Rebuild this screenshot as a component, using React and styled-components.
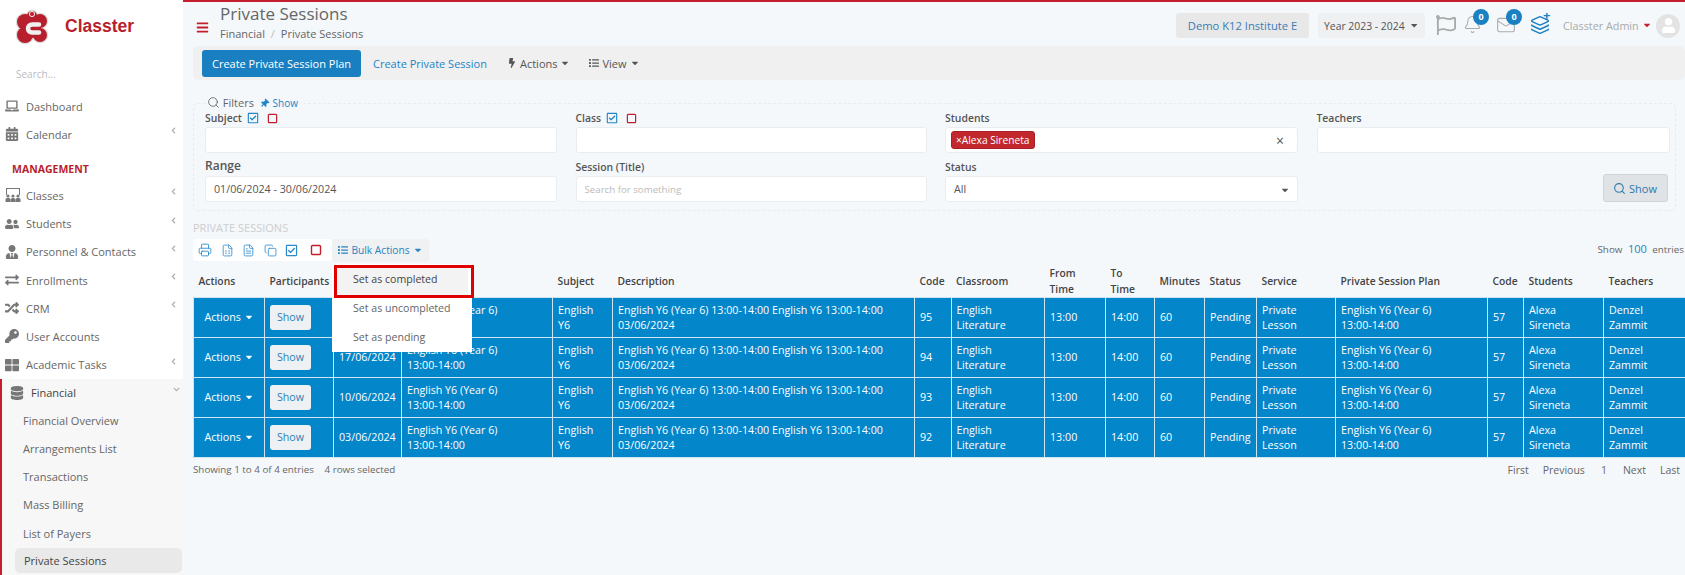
import styled, { createGlobalStyle } from 'styled-components';
import {
  FaBars, FaBolt, FaCalendarAlt, FaCaretDown, FaChevronDown, FaChevronLeft, FaDatabase, FaExchangeAlt, FaKey,
  FaLaptop, FaList, FaRandom, FaRegCheckSquare, FaRegFlag, FaThLarge, FaThumbtack, FaUser, FaUserFriends, FaUserTie,
} from 'react-icons/fa';
import { Bell, Copy, FileSpreadsheet, FileText, Layers, Mail, Printer, Search, Square } from 'lucide-react';

const GlobalStyle = createGlobalStyle`
  html, body { margin: 0; height: 575px; overflow: hidden; background: #f4f8fb; }
  body { font-family: "Open Sans", "Noto Sans", sans-serif; font-size: 11px; color: #555; }
  * { box-sizing: border-box; }
`;

const menuTop = [
  { icon: <FaLaptop />, label: 'Dashboard' },
  { icon: <FaCalendarAlt />, label: 'Calendar', arrow: true },
];
const menuManagement = [
  { icon: <ClassIcon />, label: 'Classes', arrow: true },
  { icon: <FaUserFriends />, label: 'Students', arrow: true },
  { icon: <FaUserTie />, label: 'Personnel & Contacts', arrow: true },
  { icon: <FaExchangeAlt />, label: 'Enrollments', arrow: true },
  { icon: <FaRandom />, label: 'CRM', arrow: true },
  { icon: <FaKey />, label: 'User Accounts' },
  { icon: <FaThLarge />, label: 'Academic Tasks', arrow: true },
];
const financialLinks = ['Financial Overview', 'Arrangements List', 'Transactions', 'Mass Billing', 'List of Payers'];

const columns = [
  ['Actions', 71], ['Participants', 69], ['Date', 68], ['Title', 151], ['Subject', 60], ['Description', 302],
  ['Code', 36.5], ['Classroom', 93.5], ['From Time', 61], ['To Time', 49], ['Minutes', 50], ['Status', 52],
  ['Service', 79], ['Private Session Plan', 152], ['Code', 36], ['Students', 80], ['Teachers', 82],
];
const rows = [
  { date: '24/06/2024', code: 95 },
  { date: '17/06/2024', code: 94 },
  { date: '10/06/2024', code: 93 },
  { date: '03/06/2024', code: 92 },
];

function ClassIcon() {
  return (
    <svg viewBox="0 0 16 14" width="16" height="14" fill="currentColor">
      <path d="M1 0h14v7h-1V1H2v6H1z" />
      <circle cx="3" cy="8" r="1.6" /><circle cx="8" cy="8" r="1.6" /><circle cx="13" cy="8" r="1.6" />
      <path d="M0.5 14v-2.5c0-1 1-1.5 2.5-1.5s2.5.5 2.5 1.5V14zM5.8 14v-2.5c0-1 1-1.5 2.2-1.5s2.2.5 2.2 1.5V14zM10.5 14v-2.5c0-1 1-1.5 2.5-1.5s2.5.5 2.5 1.5V14z" />
    </svg>
  );
}

const logoLobes = [[9, 13, 8], [24, 12, 7], [9, 26, 8], [24, 26, 7], [16, 7, 5], [16, 20, 9]];

function Logo() {
  return (
    <svg viewBox="0 0 33 36" width="33" height="36">
      {logoLobes.map(([x, y, r], i) => <circle key={i} cx={x} cy={y} r={r + 1.2} fill="#dcdcdc" />)}
      {logoLobes.map(([x, y, r], i) => <circle key={i} cx={x} cy={y} r={r} fill="#b81f2d" />)}
      <path d="M23 15.5h-7a4 4 0 0 0 0 8h7" fill="none" stroke="#efefef" strokeWidth="4.5" strokeLinecap="round" />
      <circle cx="16" cy="5" r="2.6" fill="#c8202f" stroke="#eee" strokeWidth="1" />
    </svg>
  );
}

function MenuRow({ icon, label, arrow }) {
  return (
    <MenuItem>
      <MenuIcon>{icon}</MenuIcon>
      <span>{label}</span>
      {arrow && <MenuArrow><FaChevronLeft /></MenuArrow>}
    </MenuItem>
  );
}

export default function App() {
  return (
    <>
      <GlobalStyle />
      <Page>
        <Sidebar>
          <Brand><Logo /><BrandName>Classter</BrandName></Brand>
          <SideSearch>Search...</SideSearch>
          {menuTop.map(m => <MenuRow key={m.label} {...m} />)}
          <SectionTitle>MANAGEMENT</SectionTitle>
          {menuManagement.map(m => <MenuRow key={m.label} {...m} />)}
          <FinancialGroup>
            <FinancialHead>
              <MenuIcon><FaDatabase /></MenuIcon>
              <span>Financial</span>
              <MenuArrow><FaChevronDown /></MenuArrow>
            </FinancialHead>
            {financialLinks.map(l => <SubLink key={l}>{l}</SubLink>)}
            <ActiveLink>Private Sessions</ActiveLink>
          </FinancialGroup>
        </Sidebar>

        <Main>
          <TopBar>
            <Burger><FaBars /></Burger>
            <TitleBlock>
              <PageTitle>Private Sessions</PageTitle>
              <Crumbs>Financial <CrumbSep>/</CrumbSep> Private Sessions</Crumbs>
            </TitleBlock>
            <TopRight>
              <Institute>Demo K12 Institute E</Institute>
              <YearPicker>Year 2023 - 2024 <FaCaretDown /></YearPicker>
              <TopIcon $w={27}><FaRegFlag size={20} /></TopIcon>
              <TopIcon $w={33}><Bell size={19} strokeWidth={1.3} /><Badge>0</Badge></TopIcon>
              <TopIcon $w={34}><Mail size={20} strokeWidth={1.3} /><Badge>0</Badge></TopIcon>
              <TopIcon $w={31} $blue><Layers size={20} strokeWidth={1.8} /><PlusMark>+</PlusMark></TopIcon>
              <UserName>Classter Admin <RedCaret><FaCaretDown /></RedCaret></UserName>
              <Avatar><FaUser /></Avatar>
            </TopRight>
          </TopBar>

          <ActionBar>
            <PrimaryButton>Create Private Session Plan</PrimaryButton>
            <ActionLink>Create Private Session</ActionLink>
            <ActionMenu><FaBolt /> Actions <FaCaretDown /></ActionMenu>
            <ActionMenu><FaList /> View <FaCaretDown /></ActionMenu>
          </ActionBar>

          <Filters>
            <FilterLegend>
              <Search size={13} strokeWidth={1.6} /> Filters
              <LegendShow><FaThumbtack /> Show</LegendShow>
            </FilterLegend>
            <FilterGrid>
              <Field>
                <FieldLabel>Subject <CheckIcon><FaRegCheckSquare /></CheckIcon><StopIcon><Square size={11} strokeWidth={2.6} /></StopIcon></FieldLabel>
                <Input />
              </Field>
              <Field>
                <FieldLabel>Class <CheckIcon><FaRegCheckSquare /></CheckIcon><StopIcon><Square size={11} strokeWidth={2.6} /></StopIcon></FieldLabel>
                <Input />
              </Field>
              <Field>
                <FieldLabel>Students</FieldLabel>
                <Input>
                  <Tag>×Alexa Sireneta</Tag>
                  <InputEnd>×</InputEnd>
                </Input>
              </Field>
              <Field>
                <FieldLabel>Teachers</FieldLabel>
                <Input />
              </Field>
              <Field $tall>
                <FieldLabel $big>Range</FieldLabel>
                <Input>01/06/2024 - 30/06/2024</Input>
              </Field>
              <Field $tall>
                <FieldLabel>Session (Title)</FieldLabel>
                <Input $placeholder>Search for something</Input>
              </Field>
              <Field $tall>
                <FieldLabel>Status</FieldLabel>
                <Input>All<InputEnd $small><FaCaretDown /></InputEnd></Input>
              </Field>
              <ShowCell>
                <ShowFilter><Search size={13} /> Show</ShowFilter>
              </ShowCell>
            </FilterGrid>
          </Filters>

          <TableTitle>PRIVATE SESSIONS</TableTitle>
          <TableTools>
            <ToolIcons>
              <Printer size={14} strokeWidth={1.5} />
              <FileSpreadsheet size={13} strokeWidth={1.5} />
              <FileText size={13} strokeWidth={1.5} />
              <Copy size={13} strokeWidth={1.5} />
              <FaRegCheckSquare size={13} />
              <StopIcon><Square size={12} strokeWidth={2.8} /></StopIcon>
            </ToolIcons>
            <BulkWrap>
              <BulkButton><FaList /> Bulk Actions <FaCaretDown /></BulkButton>
              <BulkMenu>
                <BulkItem $active>Set as completed</BulkItem>
                <BulkItem>Set as uncompleted</BulkItem>
                <BulkItem>Set as pending</BulkItem>
                <RedFrame />
              </BulkMenu>
            </BulkWrap>
            <Entries>Show <EntriesCount>100</EntriesCount> entries</Entries>
          </TableTools>

          <Table>
            <colgroup>
              {columns.map(([name, w], i) => <col key={i} width={w} />)}
            </colgroup>
            <thead>
              <tr>{columns.map(([name], i) => <Th key={i}>{name}</Th>)}</tr>
            </thead>
            <tbody>
              {rows.map(r => (
                <tr key={r.code}>
                  <Td $center>Actions <FaCaretDown size={10} /></Td>
                  <Td><RowShow>Show</RowShow></Td>
                  <Td>{r.date}</Td>
                  <Td>English Y6 (Year 6)<br />13:00-14:00</Td>
                  <Td>English<br />Y6</Td>
                  <Td>English Y6 (Year 6) 13:00-14:00 English Y6 13:00-14:00<br />03/06/2024</Td>
                  <Td>{r.code}</Td>
                  <Td>English<br />Literature</Td>
                  <Td>13:00</Td>
                  <Td>14:00</Td>
                  <Td>60</Td>
                  <Td>Pending</Td>
                  <Td>Private<br />Lesson</Td>
                  <Td>English Y6 (Year 6)<br />13:00-14:00</Td>
                  <Td>57</Td>
                  <Td>Alexa<br />Sireneta</Td>
                  <Td>Denzel<br />Zammit</Td>
                </tr>
              ))}
            </tbody>
          </Table>

          <TableFooter>
            <span>Showing 1 to 4 of 4 entries <Selected>4 rows selected</Selected></span>
            <Pager>
              <span>First</span><span>Previous</span><PagerNum>1</PagerNum><span>Next</span><span>Last</span>
            </Pager>
          </TableFooter>
        </Main>
      </Page>
    </>
  );
}

const Page = styled.div`
  display: flex;
  width: 1685px;
  height: 575px;
  overflow: hidden;
`;
const Sidebar = styled.aside`
  width: 183px;
  flex: none;
  background: #fff;
  height: 575px;
`;
const Brand = styled.div`
  height: 62px;
  display: flex;
  align-items: center;
  gap: 16px;
  padding: 0 0 9px 16px;
`;
const BrandName = styled.div`
  font-family: "Liberation Sans", Arial, sans-serif;
  font-size: 17.5px;
  font-weight: 700;
  color: #b81f2d;
`;
const SideSearch = styled.div`
  height: 30px;
  padding-left: 16px;
  line-height: 24px;
  font-size: 10px;
  color: #bbb;
`;
const MenuItem = styled.div`
  height: 28.2px;
  display: flex;
  align-items: center;
  padding-left: 5px;
  font-size: 11px;
  color: #666;
  position: relative;
`;
const MenuIcon = styled.span`
  width: 21px;
  display: inline-flex;
  align-items: center;
  color: #777;
  font-size: 14px;
`;
const MenuArrow = styled.span`
  position: absolute;
  right: 6px;
  top: 7px;
  font-size: 7px;
  color: #aaa;
`;
const SectionTitle = styled.div`
  height: 23px;
  margin-top: 10px;
  padding-left: 12px;
  font-size: 10.5px;
  font-weight: 700;
  color: #b81f2d;
  line-height: 22px;
`;
const FinancialGroup = styled.div`
  background: #f7f7f7;
  border-left: 2px solid #c41e2e;
  height: 200px;
  width: 186px;
  position: relative;
`;
const FinancialHead = styled(MenuItem)`
  padding-left: 8px;
  color: #444;
`;
const SubLink = styled.div`
  height: 28.2px;
  line-height: 28px;
  padding-left: 21px;
  font-size: 11px;
  color: #666;
`;
const ActiveLink = styled.div`
  width: 167px;
  height: 25px;
  margin-left: 13px;
  line-height: 25px;
  padding-left: 9px;
  background: #e9e9e9;
  border-radius: 5px;
  font-size: 11px;
  color: #444;
`;

const Main = styled.main`
  flex: 1;
  min-width: 0;
  padding-left: 10px;
  border-top: 2px solid #c41e2e;
`;
const TopBar = styled.header`
  height: 44px;
  display: flex;
  align-items: flex-start;
`;
const Burger = styled.div`
  width: 27px;
  padding: 18px 0 0 3px;
  color: #c41e2e;
  font-size: 13px;
`;
const TitleBlock = styled.div`
  flex: 1;
`;
const PageTitle = styled.div`
  font-size: 17px;
  line-height: 24px;
  color: #666;
`;
const Crumbs = styled.div`
  font-size: 11px;
  line-height: 16px;
  color: #666;
`;
const CrumbSep = styled.span`
  color: #bbb;
  margin: 0 3px;
`;
const TopRight = styled.div`
  display: flex;
  align-items: center;
  padding-top: 11px;
`;
const Institute = styled.div`
  width: 133px;
  height: 25px;
  line-height: 25px;
  text-align: center;
  background: #e8e8e8;
  border-radius: 3px;
  color: #3b7cb5;
  font-size: 11.2px;
  margin-right: 2px;
`;
const YearPicker = styled.div`
  width: 107px;
  height: 25px;
  margin: 0 11px 0 7px;
  display: flex;
  align-items: center;
  justify-content: center;
  gap: 4px;
  background: #eef0f2;
  border-radius: 3px;
  color: #555;
  font-size: 10.4px;
`;
const TopIcon = styled.div`
  position: relative;
  width: ${p => p.$w}px;
  height: 22px;
  color: ${p => (p.$blue ? '#1a80c4' : '#aaa')};
`;
const Badge = styled.span`
  position: absolute;
  top: -6px;
  left: 10px;
  width: 16px;
  height: 16px;
  border-radius: 50%;
  background: #1a80c4;
  color: #fff;
  font-size: 9px;
  font-weight: 700;
  line-height: 16px;
  text-align: center;
`;
const PlusMark = styled.span`
  position: absolute;
  top: -8px;
  left: 13px;
  font-size: 13px;
  font-weight: 700;
  line-height: 16px;
`;
const UserName = styled.div`
  margin-left: 2px;
  width: 93px;
  color: #aaa;
  font-size: 10.8px;
  white-space: nowrap;
`;
const RedCaret = styled.span`
  color: #c41e2e;
  font-size: 10px;
`;
const Avatar = styled.div`
  width: 24px;
  height: 24px;
  margin-right: 5px;
  border-radius: 50%;
  background: #e3e3e3;
  color: #fff;
  display: flex;
  align-items: center;
  justify-content: center;
  font-size: 15px;
`;

const ActionBar = styled.div`
  height: 34px;
  display: flex;
  align-items: center;
  padding-left: 9px;
  background: #f0f0f0;
  border-radius: 5px;
`;
const PrimaryButton = styled.div`
  width: 159px;
  height: 27px;
  line-height: 27px;
  text-align: center;
  background: #1a7fc1;
  border-radius: 3px;
  color: #fff;
  font-size: 11px;
  margin-right: 12px;
`;
const ActionLink = styled.div`
  color: #2384c6;
  font-size: 11px;
  margin-right: 20px;
`;
const ActionMenu = styled.div`
  display: flex;
  align-items: center;
  gap: 3px;
  color: #555;
  font-size: 11px;
  margin-right: 19px;
  svg { font-size: 10px; }
`;

const Filters = styled.fieldset`
  margin: 16px 10px 0 0;
  padding: 0 5px 8px 11px;
  border: 1px dashed #e8ecef;
  border-radius: 5px;
  height: 115px;
`;
const FilterLegend = styled.legend`
  padding: 0 6px 0 1px;
  margin-left: 1px;
  font-size: 11px;
  color: #666;
  line-height: 14px;
  svg { vertical-align: -2px; }
`;
const LegendShow = styled.span`
  color: #2384c6;
  font-size: 10px;
  margin-left: 6px;
  svg { font-size: 9px; transform: rotate(45deg); vertical-align: -1px; margin-right: 1px; }
`;
const FilterGrid = styled.div`
  display: grid;
  grid-template-columns: 352px 351px 353px 353px;
  column-gap: 18.5px;
`;
const Field = styled.div`
  height: ${p => (p.$tall ? '49px' : '43px')};
  display: flex;
  flex-direction: column;
  justify-content: flex-end;
`;
const FieldLabel = styled.div`
  font-size: ${p => (p.$big ? '12px' : '10.4px')};
  font-weight: 600;
  color: #555;
  line-height: 16px;
  padding-bottom: ${p => (p.$big ? '2px' : '1px')};
  display: flex;
  align-items: center;
  gap: 5px;
`;
const CheckIcon = styled.span`
  color: #2384c6;
  display: inline-flex;
  font-size: 12px;
`;
const StopIcon = styled.span`
  color: #c41e2e;
  display: inline-flex;
  margin-left: 3px;
`;
const Input = styled.div`
  height: 26px;
  background: #fff;
  border: 1px solid #e9edf0;
  border-radius: 3px;
  padding: 0 8px;
  display: flex;
  align-items: center;
  position: relative;
  font-size: ${p => (p.$placeholder ? '9.7px' : '10.7px')};
  color: ${p => (p.$placeholder ? '#bbb' : '#555')};
`;
const Tag = styled.span`
  background: #c1272d;
  color: #fff;
  border-radius: 3px;
  margin-left: -3px;
  padding: 0 4px;
  font-size: 10.2px;
  line-height: 16px;
  border: 1px solid #a81d22;
`;
const InputEnd = styled.span`
  position: absolute;
  right: ${p => (p.$small ? '7px' : '13px')};
  top: ${p => (p.$small ? '7px' : '3px')};
  font-size: ${p => (p.$small ? '10px' : '14px')};
  color: #555;
`;
const ShowCell = styled.div`
  height: 49px;
  padding-right: 2px;
  display: flex;
  align-items: flex-end;
  justify-content: flex-end;
`;
const ShowFilter = styled.div`
  width: 65px;
  height: 28px;
  display: flex;
  align-items: center;
  justify-content: center;
  gap: 3px;
  background: #dfe3e6;
  border: 1px solid #cfd4d8;
  border-radius: 3px;
  color: #2f78ad;
  font-size: 11px;
`;

const TableTitle = styled.div`
  margin-top: 9px;
  height: 19px;
  line-height: 16px;
  font-size: 11px;
  color: #cdcdcd;
`;
const TableTools = styled.div`
  height: 22px;
  display: flex;
  align-items: center;
`;
const ToolIcons = styled.div`
  width: 139px;
  height: 22px;
  background: #fff;
  border-radius: 3px;
  display: flex;
  align-items: center;
  justify-content: space-between;
  padding: 0 10px 0 5px;
  color: #2b8acb;
`;
const BulkWrap = styled.div`
  position: relative;
`;
const BulkButton = styled.div`
  width: 97px;
  height: 23px;
  display: flex;
  align-items: center;
  justify-content: center;
  gap: 3px;
  background: #eff1f3;
  border-radius: 3px;
  color: #2b82c0;
  font-size: 10.2px;
  svg { font-size: 10px; }
`;
const BulkMenu = styled.div`
  position: absolute;
  z-index: 5;
  top: 25px;
  left: 0;
  width: 140px;
  height: 88px;
  background: #fff;
  padding-top: 2px;
`;
const BulkItem = styled.div`
  height: 29px;
  margin: 0 4px;
  padding-left: 17px;
  line-height: 26px;
  font-size: 10.6px;
  color: ${p => (p.$active ? '#444' : '#666')};
  background: ${p => (p.$active ? '#f3f3f3' : 'transparent')};
`;
const RedFrame = styled.div`
  position: absolute;
  top: 1px;
  left: 2px;
  width: 140px;
  height: 33px;
  border: 3px solid #e00000;
`;
const Entries = styled.div`
  margin-left: auto;
  padding-right: 1px;
  font-size: 9.8px;
  color: #666;
  margin-top: -3px;
`;
const EntriesCount = styled.span`
  color: #2384c6;
  font-size: 11px;
  margin: 0 3px;
`;

const Table = styled.table`
  width: 1492px;
  table-layout: fixed;
  border-collapse: collapse;
`;
const Th = styled.th`
  height: 36px;
  padding: 4px 5px 0;
  text-align: left;
  font-size: 10.3px;
  font-weight: 600;
  line-height: 16px;
  color: #444;
`;
const Td = styled.td`
  height: 40px;
  padding: 0 5px;
  background: #0486cb;
  border: 1px solid #cfe4f1;
  color: #fff;
  font-size: 10.7px;
  line-height: 15px;
  text-align: ${p => (p.$center ? 'center' : 'left')};
  svg { vertical-align: -1px; }
`;
const RowShow = styled.div`
  width: 41px;
  height: 25px;
  line-height: 25px;
  text-align: center;
  background: #eef1f4;
  border-radius: 3px;
  color: #2f7fb5;
`;
const TableFooter = styled.div`
  display: flex;
  justify-content: space-between;
  padding-top: 5px;
  font-size: 9.8px;
  color: #666;
`;
const Selected = styled.span`
  margin-left: 8px;
`;
const Pager = styled.div`
  display: flex;
  gap: 14px;
  padding-right: 5px;
  font-size: 10.5px;
`;
const PagerNum = styled.span`
  margin: 0 2px;
`;
